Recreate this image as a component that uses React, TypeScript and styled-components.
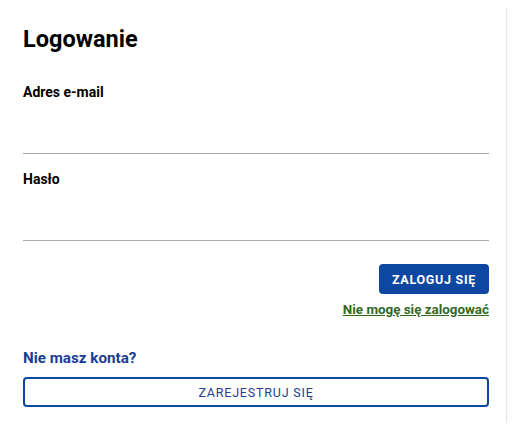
import { createGlobalStyle } from 'styled-components';
import styled from 'styled-components';

const GlobalStyle = createGlobalStyle`
  body {
    margin: 6px;
    background: #ffffff;
    font-family: Roboto, 'Noto Sans', sans-serif;
    color: #000;
  }
`;

const Card = styled.div`
  width: 500px;
  box-sizing: border-box;
  padding: 19px 17px 16px;
  background: #fff;
  box-shadow: 0 2px 2px 0 rgba(0, 0, 0, 0.2), 0 0 2px 0 rgba(0, 0, 0, 0.12);
  display: flex;
  flex-direction: column;
`;

const Title = styled.h1`
  margin: 0 0 31px;
  font-size: 23.5px;
  line-height: 28px;
  font-weight: 700;
`;

const Field = styled.div<{ $gap?: number }>`
  display: flex;
  flex-direction: column;
  margin-bottom: ${(p) => p.$gap ?? 0}px;
`;

const Label = styled.label`
  font-size: 14px;
  line-height: 16px;
  font-weight: 700;
`;

const Input = styled.input`
  height: 54px;
  box-sizing: border-box;
  border: none;
  border-bottom: 1px solid #aaaaaa;
  outline: none;
  font: inherit;
  font-size: 16px;
  padding: 0;
  background: transparent;
`;

const Actions = styled.div`
  display: flex;
  flex-direction: column;
  align-items: flex-end;
  gap: 8px;
  margin-top: 23px;
`;

const PrimaryButton = styled.button`
  height: 30px;
  padding: 0 13px;
  border: none;
  border-radius: 4px;
  background: #0d47a1;
  color: #fff;
  font-family: Roboto, sans-serif;
  font-size: 12.5px;
  font-weight: 700;
  letter-spacing: 0.7px;
  cursor: pointer;
`;

const HelpLink = styled.a`
  font-size: 13.4px;
  line-height: 16px;
  font-weight: 700;
  color: #33691e;
  text-decoration: underline;
`;

const Question = styled.h2`
  margin: 31px 0 10px;
  font-size: 15.2px;
  line-height: 18px;
  font-weight: 700;
  color: #1a3e95;
`;

const OutlineButton = styled.button`
  height: 30px;
  width: 100%;
  border: 2px solid #0d47a1;
  border-radius: 4px;
  background: #fff;
  color: #22418f;
  font-family: Roboto, sans-serif;
  font-size: 12.5px;
  font-weight: 400;
  letter-spacing: 0.8px;
  cursor: pointer;
`;

export default function App() {
  return (
    <>
      <GlobalStyle />
      <Card>
        <Title>Logowanie</Title>
        <Field $gap={17}>
          <Label htmlFor="email">Adres e-mail</Label>
          <Input id="email" type="email" />
        </Field>
        <Field>
          <Label htmlFor="password">Hasło</Label>
          <Input id="password" type="password" />
        </Field>
        <Actions>
          <PrimaryButton>ZALOGUJ SIĘ</PrimaryButton>
          <HelpLink href="#">Nie mogę się zalogować</HelpLink>
        </Actions>
        <Question>Nie masz konta?</Question>
        <OutlineButton>ZAREJESTRUJ SIĘ</OutlineButton>
      </Card>
    </>
  );
}
